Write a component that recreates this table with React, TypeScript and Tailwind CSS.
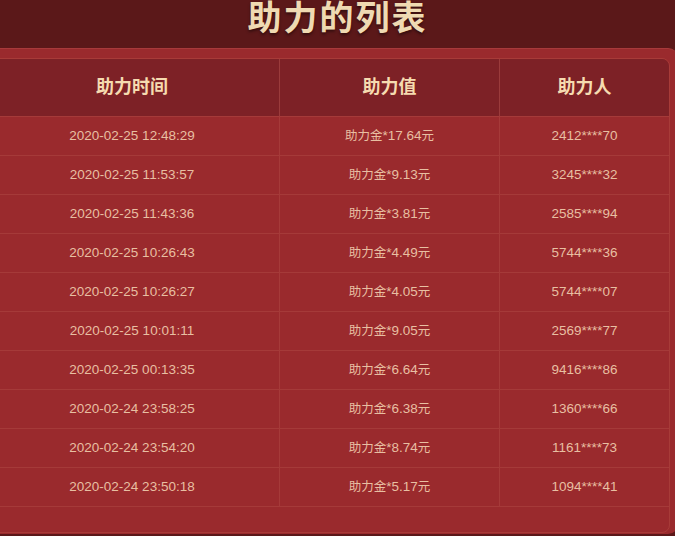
import React from 'react';

interface Record {
  time: string;
  amount: string;
  user: string;
}

const records: Record[] = [
  { time: '2020-02-25 12:48:29', amount: '17.64', user: '2412****70' },
  { time: '2020-02-25 11:53:57', amount: '9.13', user: '3245****32' },
  { time: '2020-02-25 11:43:36', amount: '3.81', user: '2585****94' },
  { time: '2020-02-25 10:26:43', amount: '4.49', user: '5744****36' },
  { time: '2020-02-25 10:26:27', amount: '4.05', user: '5744****07' },
  { time: '2020-02-25 10:01:11', amount: '9.05', user: '2569****77' },
  { time: '2020-02-25 00:13:35', amount: '6.64', user: '9416****86' },
  { time: '2020-02-24 23:58:25', amount: '6.38', user: '1360****66' },
  { time: '2020-02-24 23:54:20', amount: '8.74', user: '1161****73' },
  { time: '2020-02-24 23:50:18', amount: '5.17', user: '1094****41' },
];

const font = "font-['Liberation_Sans','Noto_Sans_CJK_SC',sans-serif]";

const App: React.FC = () => {
  return (
    <div className={`w-[675px] h-[536px] overflow-hidden bg-[#5b1819] ${font}`}>
      <div className="h-[48px] flex items-start justify-center pt-[1px]">
        <h1 className="text-[34px] leading-[34px] font-semibold text-[#efdab2] tracking-[2px] [text-shadow:0_2px_3px_rgba(0,0,0,0.45)]">
          助力的列表
        </h1>
      </div>

      <div className="ml-[-26px] w-[704px] h-[486px] bg-[#9a2a2d] rounded-[10px] border-t border-[#a83a3b] pt-[9px] pl-[10px] pr-[8px]">
        <div className="rounded-[8px] border border-[#b0483f]/60 overflow-hidden">
          <div className="grid grid-cols-[294px_220px_1fr] h-[57px] bg-[#7d2126] text-[18px] font-bold text-[#f6dbb0]">
            <div className="flex items-center justify-center">助力时间</div>
            <div className="flex items-center justify-center border-l border-[#9a3b3b]">助力值</div>
            <div className="flex items-center justify-center border-l border-[#9a3b3b]">助力人</div>
          </div>
          {records.map((r, i) => (
            <div
              key={i}
              className="grid grid-cols-[294px_220px_1fr] h-[39px] border-t border-[#a9413f]/70 text-[13.5px] text-[#e8bfa2]"
            >
              <div className="flex items-center justify-center">{r.time}</div>
              <div className="flex items-center justify-center border-l border-[#a9413f]/70">
                <span className="text-[12.5px]">助力金</span>*{r.amount}<span className="text-[12.5px]">元</span>
              </div>
              <div className="flex items-center justify-center border-l border-[#a9413f]/70">{r.user}</div>
            </div>
          ))}
          <div className="h-[26px] border-t border-[#a9413f]/70" />
        </div>
      </div>
    </div>
  );
};

export default App;
